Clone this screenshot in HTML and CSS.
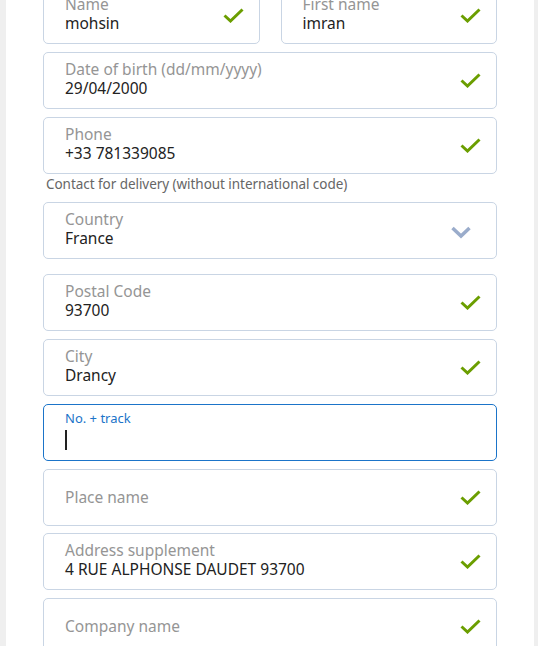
FILE: index.html
```html
<!DOCTYPE html>
<html>
<head>
<meta charset="utf-8">
<link rel="stylesheet" href="styles.css">
</head>
<body>
<div class="panel">
  <form class="form">
    <div class="row">
      <div class="field">
        <div class="text"><span class="label">Name</span><span class="value">mohsin</span></div>
        <svg class="check" viewBox="0 0 21 15"><path d="M1.5 7.5 L7.5 13 L19.5 1.5"/></svg>
      </div>
      <div class="field">
        <div class="text"><span class="label">First name</span><span class="value">imran</span></div>
        <svg class="check" viewBox="0 0 21 15"><path d="M1.5 7.5 L7.5 13 L19.5 1.5"/></svg>
      </div>
    </div>
    <div class="field">
      <div class="text"><span class="label">Date of birth (dd/mm/yyyy)</span><span class="value">29/04/2000</span></div>
      <svg class="check" viewBox="0 0 21 15"><path d="M1.5 7.5 L7.5 13 L19.5 1.5"/></svg>
    </div>
    <div class="group">
      <div class="field">
        <div class="text"><span class="label">Phone</span><span class="value">+33 781339085</span></div>
        <svg class="check" viewBox="0 0 21 15"><path d="M1.5 7.5 L7.5 13 L19.5 1.5"/></svg>
      </div>
      <div class="help">Contact for delivery (without international code)</div>
    </div>
    <div class="field select">
      <div class="text"><span class="label">Country</span><span class="value">France</span></div>
      <svg class="chev" viewBox="0 0 20 13"><path d="M1.5 2 L10 10 L18.5 2"/></svg>
    </div>
    <div class="field">
      <div class="text"><span class="label">Postal Code</span><span class="value">93700</span></div>
      <svg class="check" viewBox="0 0 21 15"><path d="M1.5 7.5 L7.5 13 L19.5 1.5"/></svg>
    </div>
    <div class="field">
      <div class="text"><span class="label">City</span><span class="value">Drancy</span></div>
      <svg class="check" viewBox="0 0 21 15"><path d="M1.5 7.5 L7.5 13 L19.5 1.5"/></svg>
    </div>
    <div class="field focus">
      <div class="text"><span class="label small">No. + track</span><span class="caret"></span></div>
    </div>
    <div class="field tight">
      <div class="text"><span class="placeholder">Place name</span></div>
      <svg class="check" viewBox="0 0 21 15"><path d="M1.5 7.5 L7.5 13 L19.5 1.5"/></svg>
    </div>
    <div class="field">
      <div class="text"><span class="label">Address supplement</span><span class="value">4 RUE ALPHONSE DAUDET 93700</span></div>
      <svg class="check" viewBox="0 0 21 15"><path d="M1.5 7.5 L7.5 13 L19.5 1.5"/></svg>
    </div>
    <div class="field">
      <div class="text"><span class="placeholder">Company name</span></div>
      <svg class="check" viewBox="0 0 21 15"><path d="M1.5 7.5 L7.5 13 L19.5 1.5"/></svg>
    </div>
  </form>
</div>
</body>
</html>
```
FILE: styles.css
```css
html, body {
  margin: 0;
  padding: 0;
  height: 100%;
  overflow: hidden;
  background: #efefef;
}
body {
  font-family: "Noto Sans", "Open Sans", sans-serif;
}
.panel {
  margin-left: 6px;
  width: 528px;
  height: 100%;
  background: #fff;
  overflow: hidden;
}
.form {
  display: flex;
  flex-direction: column;
  gap: 8px;
  padding: 0 37px;
  margin-top: -13px;
}
.row {
  display: flex;
  gap: 21px;
}
.row .field {
  flex: 1;
}
.group {
  display: flex;
  flex-direction: column;
}
.field {
  box-sizing: border-box;
  height: 57px;
  flex-shrink: 0;
  border: 1px solid #c9d5e4;
  border-radius: 5px;
  display: flex;
  align-items: center;
  padding: 0 15px 0 21px;
}
.field.focus {
  border-color: #1b74c9;
}
.field.tight {
  margin-bottom: -1px;
}
.text {
  flex: 1;
  display: flex;
  flex-direction: column;
  padding-bottom: 4px;
}
.label {
  font-size: 15.5px;
  line-height: 19px;
  color: #959595;
}
.label.small {
  font-size: 13px;
  line-height: 15px;
  color: #1b74c9;
}
.value {
  font-size: 15.5px;
  line-height: 19px;
  color: #222;
}
.placeholder {
  font-size: 15.5px;
  line-height: 19px;
  color: #959595;
  padding-top: 4px;
}
.caret {
  display: block;
  width: 2px;
  height: 20px;
  background: #222;
  margin-top: 4px;
}
.help {
  font-size: 13.5px;
  color: #666;
  line-height: 20px;
  padding: 0 0 0 3px;
  letter-spacing: -0.05px;
}
.select {
  margin-bottom: 7px;
}
.check {
  width: 21px;
  height: 15px;
  fill: none;
  stroke: #6b9e00;
  stroke-width: 3;
  stroke-linecap: butt;
  stroke-linejoin: miter;
}
.chev {
  width: 20px;
  height: 13px;
  margin-right: 10px;
  margin-top: 3px;
  fill: none;
  stroke: #9aaccb;
  stroke-width: 3.5;
}
```
